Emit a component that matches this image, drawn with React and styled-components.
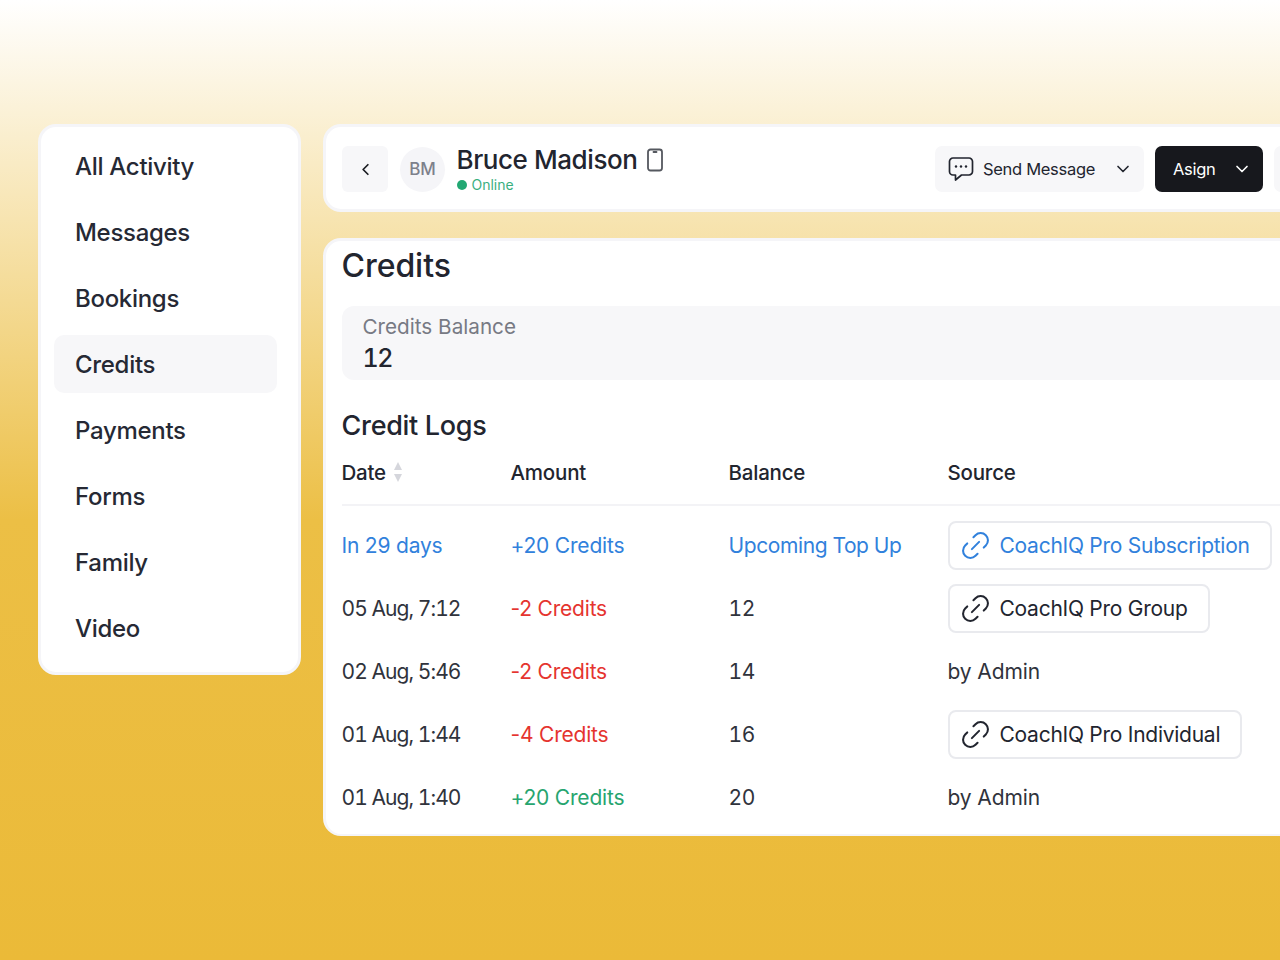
import React from "react";
import styled, { createGlobalStyle } from "styled-components";
import { ChevronLeft, ChevronDown } from "lucide-react";

const Global = createGlobalStyle`
  html, body { margin: 0; padding: 0; }
  body { font-family: Inter, "Liberation Sans", sans-serif; color: #22252f; }
`;

const Page = styled.div`
  width: 1280px;
  height: 960px;
  overflow: hidden;
  box-sizing: border-box;
  padding: 124px 0 0 38px;
  display: flex;
  align-items: flex-start;
  gap: 22px;
  background: linear-gradient(180deg, #ffffff 0%, #ecbf45 520px, #ebba38 960px);
`;

const Sidebar = styled.nav`
  flex: 0 0 263px;
  height: 551px;
  box-sizing: border-box;
  background: #fff;
  border: 3px solid #f5f5f8;
  border-radius: 18px;
  padding: 10px 21px 15px 13px;
  display: flex;
  flex-direction: column;
  gap: 8px;
`;

const NavItem = styled.div`
  height: 58px;
  display: flex;
  align-items: center;
  padding-left: 21px;
  border-radius: 10px;
  font-size: 24px;
  font-weight: 500;
  letter-spacing: -0.3px;
  color: #262934;
  background: ${(p) => (p.$active ? "#f7f7f9" : "transparent")};
`;

const Main = styled.div`
  flex: 0 0 1016px;
  display: flex;
  flex-direction: column;
  gap: 26px;
`;

const Header = styled.header`
  height: 88px;
  box-sizing: border-box;
  background: #fff;
  border: 3px solid #f5f5f8;
  border-radius: 18px;
  padding: 0 14px 0 16px;
  display: flex;
  align-items: center;
`;

const BackButton = styled.div`
  width: 46px;
  height: 46px;
  border-radius: 6px;
  background: #f7f7f9;
  display: flex;
  align-items: center;
  justify-content: center;
  color: #1a1c22;
  margin-top: 2px;
`;

const Avatar = styled.div`
  width: 45px;
  height: 45px;
  margin: 2px 11.5px 0 12px;
  border-radius: 50%;
  background: #f5f5f8;
  color: #7d808b;
  display: flex;
  align-items: center;
  justify-content: center;
  font-size: 17px;
  font-weight: 500;
`;

const Identity = styled.div`
  display: flex;
  flex-direction: column;
  margin-top: 2px;
`;

const NameRow = styled.div`
  display: flex;
  align-items: center;
  gap: 10px;
  font-size: 26px;
  line-height: 32px;
  font-weight: 500;
  letter-spacing: -0.42px;
`;

const Status = styled.div`
  display: flex;
  align-items: center;
  gap: 5px;
  font-size: 14px;
  line-height: 18px;
  color: #3aaf7f;
`;

const Dot = styled.span`
  width: 10px;
  height: 10px;
  border-radius: 50%;
  background: #22a873;
`;

const Actions = styled.div`
  margin-left: auto;
  margin-top: 2px;
  display: flex;
  gap: 11px;
`;

const ActionButton = styled.div`
  height: 46px;
  width: ${(p) => p.$width}px;
  box-sizing: border-box;
  padding: 0 11px 0 ${(p) => p.$pad}px;
  display: flex;
  align-items: center;
  border-radius: 7px;
  font-size: 16.5px;
  letter-spacing: -0.3px;
  background: ${(p) => (p.$dark ? "#17181d" : "#f7f7f9")};
  color: ${(p) => (p.$dark ? "#fff" : "#22252f")};
  svg:last-child { margin-left: auto; }
`;

const ActionLabel = styled.span`
  margin-left: ${(p) => p.$gap}px;
`;

const Card = styled.section`
  height: 598px;
  box-sizing: border-box;
  background: #fff;
  border: 3px solid #f5f5f8;
  border-bottom-width: 2px;
  border-radius: 18px;
  padding: 0 0 0 15.5px;
`;

const Title = styled.h1`
  margin: 0;
  padding-top: 5px;
  font-size: 32px;
  line-height: 40px;
  font-weight: 500;
  letter-spacing: -0.05px;
`;

const Balance = styled.div`
  margin-top: 20px;
  height: 74px;
  box-sizing: border-box;
  padding: 8px 21px;
  background: #f7f7f9;
  border-radius: 12px;
`;

const BalanceLabel = styled.div`
  font-size: 20.7px;
  line-height: 26px;
  color: #777a84;
`;

const BalanceValue = styled.div`
  margin-top: 2px;
  font-size: 25px;
  line-height: 32px;
  font-weight: 500;
  font-variant-numeric: tabular-nums;
  letter-spacing: -1.5px;
`;

const SubTitle = styled.h2`
  margin: 28px 0 -1px;
  font-size: 27px;
  line-height: 36px;
  font-weight: 500;
  letter-spacing: -0.3px;
`;

const Row = styled.div`
  display: grid;
  grid-template-columns: 169px 218px 219px 1fr;
  align-items: center;
  height: 63px;
  font-size: 21px;
  letter-spacing: -0.2px;
`;

const HeadRow = styled(Row)`
  border-bottom: 2px solid #f3f3f6;
  font-weight: 500;
  padding-bottom: 3px;
  box-sizing: border-box;
`;

const Rows = styled.div`
  padding-top: 8px;
`;

const Cell = styled.div`
  color: ${(p) => p.$color || "#30333c"};
  display: flex;
  align-items: center;
  gap: 7px;
`;

const DateCell = styled(Cell)`
  font-variant-numeric: ${(p) => (p.$upcoming ? "normal" : "tabular-nums")};
  letter-spacing: ${(p) => (p.$upcoming ? "-0.2px" : "-0.95px")};
`;

const BalanceCell = styled(Cell)`
  font-variant-numeric: tabular-nums;
  letter-spacing: -0.4px;
`;

const SourceCell = styled(Cell)`
  letter-spacing: -0.1px;
`;

const HeadCell = styled(Cell)`
  color: #22252f;
  font-size: 20.5px;
  letter-spacing: -0.2px;
`;

const Pill = styled.div`
  display: inline-flex;
  align-items: center;
  gap: 6.5px;
  height: 49px;
  box-sizing: border-box;
  margin-top: -1px;
  padding: 0 20px 0 8.5px;
  border: 2px solid #e9eaee;
  border-radius: 8px;
  letter-spacing: -0.26px;
  color: ${(p) => p.$color || "#22252f"};
`;

const LinkIcon = () => (
  <svg width="35" height="35" viewBox="0 0 24 24" fill="none" stroke="currentColor" strokeWidth="1.4" strokeLinecap="round" strokeLinejoin="round">
    <g transform="rotate(-45 12 12)">
      <path d="M9 17H7A5 5 0 0 1 7 7h2" />
      <path d="M15 7h2a5 5 0 1 1 0 10h-2" />
      <line x1="8.5" y1="12" x2="15.5" y2="12" />
    </g>
  </svg>
);

const PhoneIcon = () => (
  <svg width="16" height="24" viewBox="0 0 16 24" fill="none" stroke="#55585f" strokeWidth="1.8">
    <rect x="1" y="1.5" width="14" height="21" rx="2.5" />
    <line x1="6.5" y1="4" x2="9.5" y2="4" strokeLinecap="round" />
  </svg>
);

const MessageIcon = () => (
  <svg width="26" height="26" viewBox="0 0 26 26" fill="none" stroke="#22252f" strokeWidth="1.7" strokeLinejoin="round">
    <path d="M5 2h16a3.5 3.5 0 0 1 3.5 3.5v10a3.5 3.5 0 0 1-3.5 3.5h-7.5L7.5 24v-5H5a3.5 3.5 0 0 1-3.5-3.5v-10A3.5 3.5 0 0 1 5 2z" />
    <circle cx="8" cy="10.5" r="1.2" fill="#22252f" stroke="none" />
    <circle cx="13" cy="10.5" r="1.2" fill="#22252f" stroke="none" />
    <circle cx="18" cy="10.5" r="1.2" fill="#22252f" stroke="none" />
  </svg>
);

const SortIcon = () => (
  <svg width="10" height="22" viewBox="0 0 10 22" fill="#d5d6dc">
    <path d="M5 1l4 8H1z" />
    <path d="M5 21l4-8H1z" />
  </svg>
);

const BLUE = "#3181dc";
const RED = "#e5342f";
const GREEN = "#27a56f";

const nav = ["All Activity", "Messages", "Bookings", "Credits", "Payments", "Forms", "Family", "Video"];

const logs = [
  { date: "In 29 days", amount: "+20 Credits", color: BLUE, balance: "Upcoming Top Up", pill: "CoachIQ Pro Subscription", rowColor: BLUE },
  { date: "05 Aug, 7:12", amount: "-2 Credits", color: RED, balance: "12", pill: "CoachIQ Pro Group" },
  { date: "02 Aug, 5:46", amount: "-2 Credits", color: RED, balance: "14", source: "by Admin" },
  { date: "01 Aug, 1:44", amount: "-4 Credits", color: RED, balance: "16", pill: "CoachIQ Pro Individual" },
  { date: "01 Aug, 1:40", amount: "+20 Credits", color: GREEN, balance: "20", source: "by Admin" },
];

export default function App() {
  return (
    <Page>
      <Global />
      <Sidebar>
        {nav.map((n) => (
          <NavItem key={n} $active={n === "Credits"}>{n}</NavItem>
        ))}
      </Sidebar>
      <Main>
        <Header>
          <BackButton><ChevronLeft size={19} strokeWidth={2.2} /></BackButton>
          <Avatar>BM</Avatar>
          <Identity>
            <NameRow>Bruce Madison <PhoneIcon /></NameRow>
            <Status><Dot />Online</Status>
          </Identity>
          <Actions>
            <ActionButton $width={209} $pad={13}>
              <MessageIcon />
              <ActionLabel $gap={9}>Send Message</ActionLabel>
              <ChevronDown size={20} strokeWidth={2} />
            </ActionButton>
            <ActionButton $width={108} $pad={18} $dark>
              <ActionLabel $gap={0}>Asign</ActionLabel>
              <ChevronDown size={20} strokeWidth={2} />
            </ActionButton>
            <ActionButton $width={48} $pad={0} />
          </Actions>
        </Header>
        <Card>
          <Title>Credits</Title>
          <Balance>
            <BalanceLabel>Credits Balance</BalanceLabel>
            <BalanceValue>12</BalanceValue>
          </Balance>
          <SubTitle>Credit Logs</SubTitle>
          <HeadRow>
            <HeadCell>Date <SortIcon /></HeadCell>
            <HeadCell>Amount</HeadCell>
            <HeadCell>Balance</HeadCell>
            <HeadCell>Source</HeadCell>
          </HeadRow>
          <Rows>
            {logs.map((l) => (
              <Row key={l.date}>
                <DateCell $color={l.rowColor} $upcoming={!!l.rowColor}>{l.date}</DateCell>
                <Cell $color={l.color}>{l.amount}</Cell>
                <BalanceCell $color={l.rowColor}>{l.balance}</BalanceCell>
                <SourceCell>
                  {l.pill ? (
                    <Pill $color={l.rowColor}><LinkIcon />{l.pill}</Pill>
                  ) : (
                    l.source
                  )}
                </SourceCell>
              </Row>
            ))}
          </Rows>
        </Card>
      </Main>
    </Page>
  );
}
